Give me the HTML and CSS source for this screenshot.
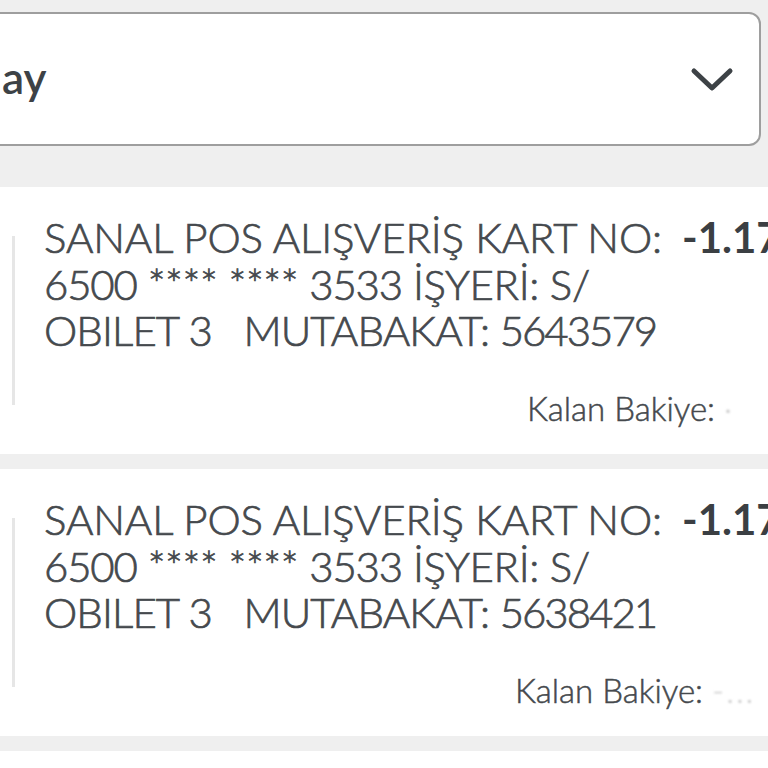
FILE: index.html
```html
<!DOCTYPE html>
<html lang="tr">
<head>
<meta charset="utf-8">
<title>Hesap Hareketleri</title>
<link rel="stylesheet" href="styles.css">
</head>
<body>
<main class="page">
  <div class="filter">
    <div class="select">
      <span class="select-value">ay</span>
      <svg class="chevron" viewBox="0 0 44 26" width="44" height="26" aria-hidden="true">
        <path d="M4 4 L22 21 L40 4" fill="none" stroke="#3d4246" stroke-width="5" stroke-linecap="round" stroke-linejoin="round"/>
      </svg>
    </div>
  </div>

  <section class="list">
    <article class="card">
      <div class="bar"></div>
      <div class="card-body">
        <div class="top">
          <p class="desc"><span class="line">SANAL POS ALIŞVERİŞ KART NO:</span><span class="line line2"><span class="num">6500</span> **** **** <span class="num">3533</span> İŞYERİ: S/</span><span class="line line3">OBILET 3   MUTABAKAT: <span class="num">5643579</span></span></p>
          <span class="amount">-1.175,00 TL</span>
        </div>
        <p class="balance">Kalan Bakiye: <span class="hidden-val v1">·</span></p>
      </div>
    </article>

    <article class="card">
      <div class="bar"></div>
      <div class="card-body">
        <div class="top">
          <p class="desc"><span class="line">SANAL POS ALIŞVERİŞ KART NO:</span><span class="line line2"><span class="num">6500</span> **** **** <span class="num">3533</span> İŞYERİ: S/</span><span class="line line3">OBILET 3   MUTABAKAT: <span class="num">5638421</span></span></p>
          <span class="amount">-1.175,00 TL</span>
        </div>
        <p class="balance">Kalan Bakiye: <span class="hidden-val v2">-...</span></p>
      </div>
    </article>

    <article class="card card-next"></article>
  </section>
</main>
</body>
</html>
```

FILE: styles.css
```css
html, body {
  margin: 0;
  padding: 0;
  background: #efefef;
  overflow: hidden;
  height: 768px;
}

.page {
  font-family: Lato, "Open Sans", "Noto Sans", sans-serif;
  color: #45494d;
  width: 768px;
}

.filter {
  padding-top: 12px;
  margin-left: -40px;
}

.select {
  box-sizing: border-box;
  width: 801px;
  height: 134px;
  background: #fff;
  border: 2px solid #9e9e9e;
  border-radius: 12px;
  display: flex;
  align-items: center;
  justify-content: space-between;
  padding: 0 25px 0 40px;
}

.select-value {
  font-size: 44px;
  font-weight: 600;
  color: #3d4246;
  line-height: 1;
  margin-top: -4px;
}

.chevron {
  display: block;
  margin-top: 2px;
}

.list {
  margin-top: 41px;
  display: flex;
  flex-direction: column;
  gap: 15px;
}

.card {
  background: #fff;
  display: flex;
  height: 267px;
  box-sizing: border-box;
}

.card-next {
  height: 40px;
}

.bar {
  width: 3px;
  margin: 49px 0 49px 12px;
  background: #e6e6e6;
}

.card-body {
  flex: 1;
  min-width: 0;
  padding: 27px 0 0 29px;
  display: flex;
  flex-direction: column;
}

.top {
  display: flex;
  align-items: flex-start;
}

.desc {
  margin: 0;
  width: 638px;
  flex: none;
  font-size: 42px;
  font-weight: 300;
  line-height: 46.5px;
  letter-spacing: -0.15px;
  -webkit-text-stroke: 0.7px #45494d;
}

.line {
  display: block;
  white-space: pre;
}

.num {
  letter-spacing: -1.2px;
}

.line2 {
  letter-spacing: -0.4px;
}

.line3 {
  letter-spacing: -0.9px;
}

.line3 .num {
  letter-spacing: -2px;
}

.amount {
  font-size: 42px;
  line-height: 46.5px;
  font-weight: 700;
  color: #3b3f43;
  white-space: nowrap;
}

.balance {
  margin: 35px 0 0;
  font-size: 33px;
  font-weight: 300;
  line-height: 38px;
  text-align: right;
  white-space: nowrap;
  -webkit-text-stroke: 0.5px #45494d;
}

.hidden-val {
  display: inline-block;
  color: #c8c8c8;
  -webkit-text-stroke: 0;
  filter: blur(1px);
}

.v1 {
  width: 44px;
  text-align: left;
}

.v2 {
  width: 56px;
  text-align: left;
  letter-spacing: 2px;
}
```
